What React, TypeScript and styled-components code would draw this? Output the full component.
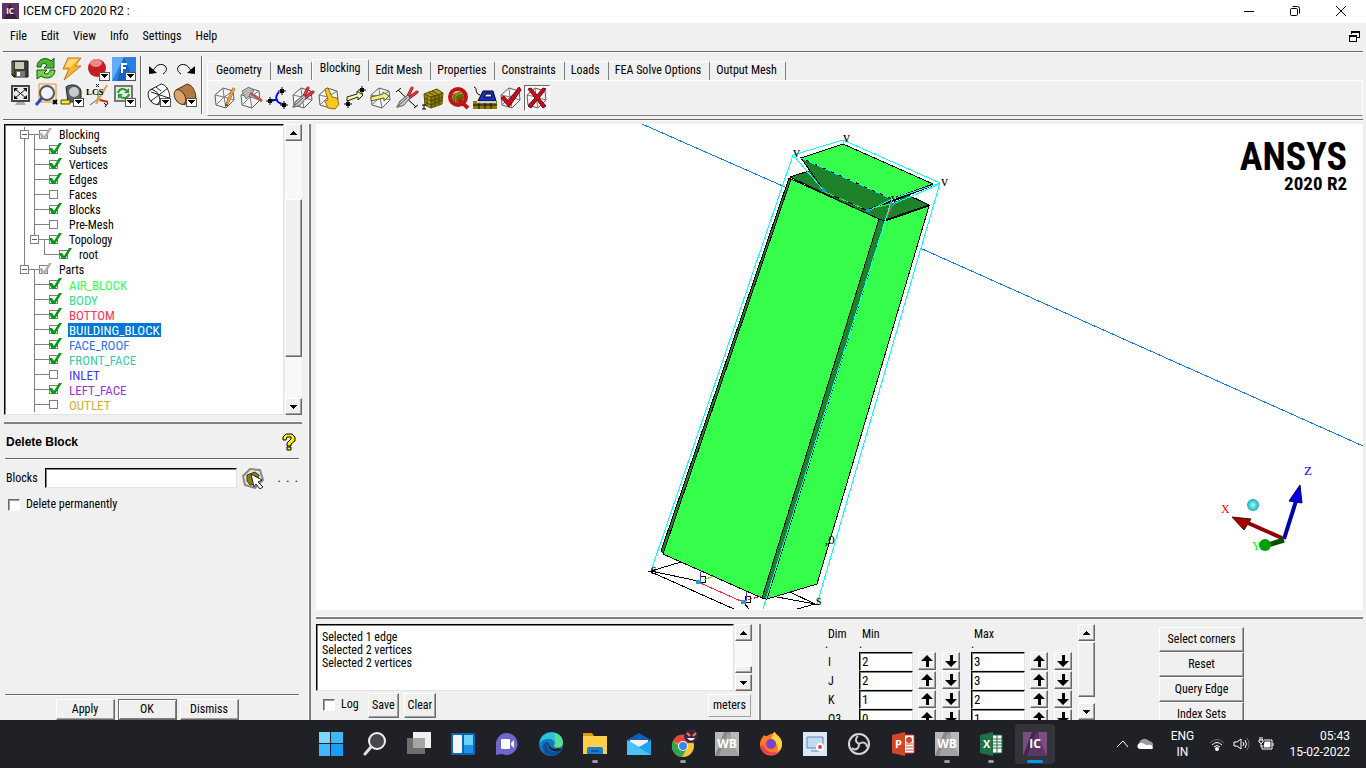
import React from "react";
import styled, { createGlobalStyle, css } from "styled-components";

const GlobalStyle = createGlobalStyle`
  * { box-sizing: border-box; }
  body { margin: 0; background: #f0f0f0; color: #000; font: 12px/15px "Roboto Condensed", Roboto, "Liberation Sans", sans-serif; }
  button, input, textarea { font: inherit; color: inherit; margin: 0; border-radius: 0; }
  svg { display: block; flex: none; }
`;

const raised = css`
  border: 1px solid;
  border-color: #fff #696969 #696969 #fff;
  box-shadow: inset -1px -1px 0 #a0a0a0;
`;
const sunken = css`
  border: 1px solid;
  border-color: #000 #e3e3e3 #e3e3e3 #000;
  box-shadow: inset 1px 1px 0 #808080;
`;

const Window = styled.div`
  display: flex;
  flex-direction: column;
  height: 100vh;
  overflow: hidden;
`;

/* ---------- title and menu ---------- */
const TitleBar = styled.header`
  display: flex;
  align-items: center;
  height: 23px;
  padding: 0 2px 2px;
  background: #fff;
  font: 12px/16px Roboto, "Noto Sans", sans-serif;
`;
const Title = styled.h1`
  flex: 1;
  margin: 0 0 0 4px;
  font: inherit;
`;
const CaptionButton = styled.button`
  display: grid;
  place-items: center;
  width: 46px;
  height: 21px;
  padding: 0;
  border: 0;
  background: none;
`;
const MenuBar = styled.nav`
  display: flex;
  align-items: center;
  height: 28px;
  padding: 0 6px 2px 4px;
`;
const MenuItem = styled.button`
  padding: 0 8px 0 6px;
  border: 0;
  background: none;
  text-align: left;
`;
const Push = styled.span`
  flex: 1;
`;
const BareButton = styled.button`
  display: grid;
  place-items: center;
  padding: 0;
  border: 0;
  background: none;
`;

/* ---------- toolbar ---------- */
const Toolbar = styled.div`
  display: flex;
  flex: none;
  height: 69px;
  margin: 0 3px;
  padding: 4px 0 0 4px;
  border-top: 1px solid #696969;
  border-bottom: 1px solid #696969;
  box-shadow: inset 0 1px 0 #fff, 0 1px 0 #fff;
`;
const ToolGrid = styled.div<{ $cols: number }>`
  display: grid;
  grid-template-columns: repeat(${(p) => p.$cols}, 26px);
  grid-auto-rows: 26px;
`;
const ToolButton = styled.button<{ $pressed?: boolean }>`
  display: grid;
  place-items: center;
  width: 26px;
  height: 26px;
  padding: 0;
  border: 1px solid transparent;
  background: none;
  ${(p) => p.$pressed && css`border-color: #696969 #fff #fff #696969; background: #f8f8f8;`}
`;
const Divider = styled.span<{ $tall?: boolean }>`
  flex: none;
  width: 2px;
  height: ${(p) => (p.$tall ? 58 : 52)}px;
  margin: 0 4px 0 3px;
  border-left: 1px solid #696969;
  border-right: 1px solid #fff;
`;
const TabArea = styled.div`
  flex: 1;
  padding-top: 2px;
`;
const TabList = styled.div`
  display: flex;
  align-items: flex-end;
  height: 22px;
`;
const Tab = styled.button<{ $active?: boolean }>`
  height: ${(p) => (p.$active ? 22 : 19)}px;
  margin-bottom: ${(p) => (p.$active ? -1 : 0)}px;
  padding: ${(p) => (p.$active ? "0 8px 4px 7px" : "0 8px 2px 6px")};
  border: 0;
  border-top: 1px solid #fff;
  border-right: 1px solid #808080;
  border-left: ${(p) => (p.$active ? "1px solid #fff" : 0)};
  border-top-right-radius: 2px;
  background: #f0f0f0;
  white-space: nowrap;
  &:first-child { padding-left: 8px; border-left: 1px solid #fff; border-top-left-radius: 3px; }
`;
const TabPanel = styled.div`
  display: flex;
  align-items: center;
  height: 36px;
  padding-left: 4px;
  border: 1px solid #fff;
  border-bottom-color: #808080;
`;

/* ---------- main split ---------- */
const Main = styled.main`
  display: grid;
  grid-template-columns: 302px 9px 1fr;
  flex: 1;
  min-height: 0;
  padding: 4px 3px 0 0;
`;
const SidePanel = styled.aside`
  display: flex;
  flex-direction: column;
  min-height: 0;
  padding-left: 4px;
`;
const VSash = styled.div`
  width: 3px;
  border-left: 1px solid #fff;
  border-right: 2px solid #808080;
`;
const HSash = styled.div`
  flex: none;
  height: 3px;
  border-top: 1px solid #fff;
  border-bottom: 2px solid #808080;
`;
const MainSash = styled(VSash)`
  justify-self: end;
`;

/* ---------- tree ---------- */
const TreeFrame = styled.div`
  display: flex;
  gap: 1px;
  flex: none;
  height: 291px;
  margin-bottom: 6px;
`;
const TreeBox = styled.ul`
  ${sunken}
  flex: 1;
  margin: 0;
  padding: 2px 0 0 14px;
  overflow: hidden;
  background: #fff;
  list-style: none;
`;
const TreeRow = styled.li`
  display: flex;
  align-items: center;
  height: 15px;
`;
const Guide = styled.span<{ $up?: boolean; $down?: boolean; $right?: boolean; $left?: boolean }>`
  display: grid;
  place-items: center;
  flex: none;
  width: 10px;
  height: 15px;
  background-repeat: no-repeat;
  background-image: ${(p) =>
    [p.$up, p.$down, p.$left, p.$right]
      .map((on) => `linear-gradient(${on ? "#808080, #808080" : "transparent, transparent"})`)
      .join(", ")};
  background-size: 1px 8px, 1px 8px, 5px 1px, 6px 1px;
  background-position: 5px 0, 5px 7px, 0 7px, 5px 7px;
`;
const Toggle = styled.button`
  display: grid;
  place-items: center;
  width: 9px;
  height: 9px;
  padding: 0;
  border: 1px solid #808080;
  background: #fff;
  &::after { content: ""; width: 5px; height: 1px; background: #606060; }
`;
const TreeLabel = styled.label<{ $color?: string; $selected?: boolean }>`
  display: flex;
  align-items: center;
  color: ${(p) => (p.$selected ? "#fff" : p.$color || "#000")};
`;
const TreeText = styled.span<{ $selected?: boolean; $caps?: boolean }>`
  height: 14px;
  margin-left: 5px;
  padding: 0 1px;
  line-height: 15px;
  background: ${(p) => (p.$selected ? "#0078d7" : "none")};
  font-size: ${(p) => (p.$caps ? 13 : 12)}px;
`;
const TickHolder = styled.span`
  position: relative;
  width: 14px;
  height: 15px;
  svg { position: absolute; left: 0; top: 0; pointer-events: none; }
`;
const TreeCheck = styled.input`
  display: block;
  appearance: none;
  width: 9px;
  height: 9px;
  && { margin: 3px 0 0; }
  border: 1px solid #808080;
  background: #fff;
`;

/* ---------- scroll bars ---------- */
const Scroll = styled.div`
  display: flex;
  flex-direction: column;
  flex: none;
  width: 17px;
  background: #f8f8f8;
`;
const ScrollButton = styled.button`
  ${raised}
  display: grid;
  place-items: center;
  flex: none;
  height: 17px;
  padding: 0;
  background: #f0f0f0;
`;
const Track = styled.div<{ $parts: [number, number, number] }>`
  display: grid;
  grid-template-rows: ${(p) => p.$parts.map((n) => n + "fr").join(" ")};
  flex: 1;
`;
const Thumb = styled.div`
  ${raised}
  grid-row: 2;
  background: #f0f0f0;
`;
function ScrollBar({ parts }: { parts: [number, number, number] }) {
  return (
    <Scroll>
      <ScrollButton aria-label="Scroll up">
        <svg width="7" height="4" shapeRendering="crispEdges"><path d="M3 0h1v1h1v1h1v1h1v1H0V3h1V2h1V1h1z" /></svg>
      </ScrollButton>
      <Track $parts={parts}><Thumb /></Track>
      <ScrollButton aria-label="Scroll down">
        <svg width="7" height="4" shapeRendering="crispEdges"><path d="M0 0h7v1H6v1H5v1H4v1H3V3H2V2H1V1H0z" /></svg>
      </ScrollButton>
    </Scroll>
  );
}

/* ---------- delete block panel ---------- */
const PanelTitle = styled.div`
  display: flex;
  align-items: center;
  justify-content: space-between;
  height: 35px;
  margin: 0 3px 0 1px;
  padding: 1px 3px 0 1px;
  border-bottom: 1px solid #696969;
  box-shadow: 0 1px 0 #fff;
`;
const PanelHeading = styled.h2`
  margin: 0;
  font: bold 12px/16px "Liberation Sans", Arial, sans-serif;
`;
const FieldRow = styled.div`
  display: flex;
  align-items: center;
  height: 20px;
  margin: 9px 4px 0 2px;
`;
const FieldLabel = styled.label`
  width: 39px;
`;
const FieldInput = styled.input`
  ${sunken}
  width: 193px;
  height: 20px;
  background: #fff;
`;
const PickButton = styled(BareButton)`
  margin: 0 12px 0 5px;
`;
const MoreButton = styled(BareButton)`
  white-space: pre;
`;
const CheckLabel = styled.label`
  display: flex;
  align-items: center;
  gap: 6px;
  white-space: nowrap;
`;
const PanelCheck = styled(CheckLabel)`
  margin: 9px 0 0 4px;
`;
const BoxCheck = styled.input`
  appearance: none;
  width: 12px;
  height: 12px;
  border: 1px solid;
  border-color: #696969 #fff #fff #696969;
  background: #fff;
  box-shadow: inset 1px 1px 0 #a0a0a0;
`;
const PanelActions = styled.div`
  display: flex;
  justify-content: center;
  gap: 3px;
  height: 26px;
  margin: auto 3px 0 1px;
  padding: 4px 10px 0 0;
  border-top: 1px solid #696969;
  box-shadow: inset 0 1px 0 #fff;
`;
const PushButton = styled.button<{ $default?: boolean; $flat?: boolean; $pad?: number }>`
  ${raised}
  padding: 0 ${(p) => p.$pad ?? 1}px;
  background: #f0f0f0;
  white-space: nowrap;
  ${(p) => p.$default && css`border-color: #696969; box-shadow: inset 1px 1px 0 #fff, inset -1px -1px 0 #808080;`}
  ${(p) => p.$flat && css`border-color: #fff #a0a0a0 #a0a0a0 #fff; box-shadow: none;`}
`;
const ActionButton = styled(PushButton)`
  width: 59px;
  height: 21px;
`;

/* ---------- workspace ---------- */
const Workspace = styled.section`
  display: flex;
  flex-direction: column;
  min-width: 0;
  min-height: 0;
  padding-left: 5px;
`;
const Viewport = styled.div`
  position: relative;
  flex: 1;
  min-height: 0;
  overflow: hidden;
  background: #fff;
`;
const Scene = styled.svg`
  width: 100%;
  height: 100%;
`;
const Brand = styled.div`
  position: absolute;
  top: 14px;
  right: 16px;
  text-align: right;
  font-family: "Roboto Condensed", Roboto, "Liberation Sans", sans-serif;
  font-weight: bold;
`;
const BrandName = styled.div`
  font-size: 38px;
  line-height: 38px;
`;
const BrandVersion = styled.div`
  font-size: 19px;
  line-height: 16px;
`;
const BottomArea = styled.div`
  display: flex;
  flex: none;
  height: 110px;
  padding-top: 5px;
  overflow: hidden;
`;
const ViewGap = styled(HSash)`
  margin-top: 6px;
  margin-bottom: -9px;
`;
const LogPane = styled.div`
  flex: 0 0 436px;
  padding-top: 9px;
`;
const LogFrame = styled.div`
  display: flex;
  gap: 1px;
  height: 67px;
`;
const LogText = styled.textarea`
  ${sunken}
  flex: 1;
  padding: 6px 5px 0;
  background: #fff;
  line-height: 13px;
  resize: none;
  overflow: hidden;
`;
const LogActions = styled.div`
  display: flex;
  align-items: flex-start;
  gap: 5px;
  padding: 2px 1px 0 7px;
`;
const LogCheck = styled(CheckLabel)`
  width: 40px;
  height: 23px;
`;
const LogButton = styled(PushButton)`
  height: 25px;
`;
const UnitButton = styled(PushButton)`
  height: 23px;
  margin-top: 1px;
`;
const PaneSash = styled(VSash)`
  flex: none;
  margin: 9px 64px 0 6px;
`;
const DimPane = styled.div`
  display: flex;
  flex: none;
  height: 105px;
  padding-top: 9px;
  overflow: hidden;
`;
const DimTable = styled.table`
  align-self: flex-start;
  table-layout: fixed;
  width: 253px;
  border-collapse: collapse;
  th, td { height: 19px; padding: 0; font-weight: normal; text-align: left; vertical-align: top; }
  thead th { padding: 3px 0 0 3px; }
  tbody th { padding: 3px 0 0 3px; }
`;
const DotRow = styled.tr`
  && td { height: 9px; line-height: 3px; }
`;
const DimInput = styled.input`
  ${sunken}
  display: block;
  width: 54px;
  height: 19px;
  padding: 0 2px;
  background: #fff;
  font-size: 13px;
`;
const StepButton = styled.button`
  ${raised}
  display: grid;
  place-items: center;
  width: 18px;
  height: 18px;
  && { margin-left: 3px; }
  padding: 0;
  background: #f0f0f0;
`;
const SideButtons = styled.div`
  display: flex;
  flex-direction: column;
  flex: none;
  width: 85px;
  margin: 12px 0 0 64px;
`;
const SideButton = styled(PushButton)`
  flex: none;
  height: 25px;
`;

/* ---------- taskbar ---------- */
const TaskBar = styled.footer`
  display: grid;
  grid-template-columns: 1fr auto 1fr;
  flex: none;
  height: 48px;
  background: #202127;
  color: #fff;
`;
const TaskApps = styled.div`
  display: flex;
  grid-column: 2;
`;
const TaskButton = styled.button<{ $state?: "open" | "active" }>`
  position: relative;
  display: grid;
  place-items: center;
  width: 40px;
  height: 40px;
  && { margin: 4px 2px; }
  padding: 0;
  border: 0;
  border-radius: 4px;
  background: ${(p) => (p.$state === "active" ? "#34353b" : "none")};
  &::after {
    content: "";
    display: ${(p) => (p.$state ? "block" : "none")};
    position: absolute;
    bottom: 1px;
    width: ${(p) => (p.$state === "active" ? 16 : 6)}px;
    height: 3px;
    border-radius: 2px;
    background: ${(p) => (p.$state === "active" ? "#0a93ff" : "#9a9a9a")};
  }
`;
const Tray = styled.div`
  display: flex;
  align-items: center;
  justify-content: flex-end;
  padding-right: 16px;
  font: 12px/16px Roboto, "Noto Sans", sans-serif;
`;
const TrayGroup = styled.div`
  display: flex;
  align-items: center;
  gap: 8px;
`;
const Language = styled.div`
  width: 54px;
  text-align: center;
`;
const Clock = styled.time`
  margin-left: 14px;
  text-align: right;
`;

/* ---------- toolbar drawings ---------- */
const Wire = () => (
  <g fill="none" stroke="#5c5c5c">
    <path d="M2 9 10 2l10 3 1 9-8 8-10-3z" fill="#f4f4f4" />
    <path d="M2 9l9 2 9-6M11 11l2 11M11 11l-8 8M11 11l10 3M10 2l1 9" stroke="#7a7a7a" />
  </g>
);
const Icon = ({ children }: { children: React.ReactNode }) => (
  <svg width="24" height="24" viewBox="0 0 24 24">{children}</svg>
);
const Drop = () => (
  <g shapeRendering="crispEdges">
    <rect x="13" y="15" width="10" height="8" fill="#fff" stroke="#555" />
    <path d="M14 17h8l-4 4z" />
  </g>
);
const Star = ({ x, y }: { x: number; y: number }) => (
  <g>
    <path d={`M${x - 4} ${y}h8M${x} ${y - 4}v8M${x - 2} ${y - 2}l4 4M${x + 2} ${y - 2}l-4 4`} stroke="#000" fill="none" />
    <circle cx={x} cy={y} r="2" />
  </g>
);
const Cube = ({ x = 2, y = 2, s = 1 }: { x?: number; y?: number; s?: number }) => (
  <g transform={`translate(${x} ${y}) scale(${s})`}>
    <path d="M1 6 14 1l6 4-1 11-11 4-6-3z" fill="#b09c18" stroke="#504600" />
    <path d="M8 9 20 5l-1 11-11 4z" fill="#857408" />
    <path d="M1 6l7 3 12-4M8 9v11M5 4l7 4v11M9 3l7 4v10M1 10l7 3 12-4M2 14l6 3 11-5M4 7v11" stroke="#4d4300" fill="none" />
  </g>
);
const Pliers = () => (
  <g fill="none" strokeLinecap="round" strokeLinejoin="round">
    <path d="M13 10 17 2M14 12 22 6" stroke="#8c1018" strokeWidth="3" />
    <path d="M13 10 17 2M14 12 22 6" stroke="#e83440" strokeWidth="2" />
    <path d="M2 21 5 15l8-6 2 3-6 7z" fill="#c8c8c8" stroke="#5a5a5a" />
    <path d="M3 20l9-8" stroke="#5a5a5a" />
  </g>
);

const fileIcons: [string, React.ReactNode][] = [
  ["Save project", <Icon><path d="M4 4h16v16H6l-2-2z" fill="#3c3c34" stroke="#111" /><path d="M7 5h9v7H7z" fill="#c9c9b4" /><path d="M8 14h9v6H8z" fill="#777" /><path d="M9 15h3v4H9z" fill="#fff" /><path d="M5 5v12" stroke="#80803c" /></Icon>],
  ["Refresh", <Icon><path d="M3 10c0-8 9-11 14-6l3-3v10h-10l3-3c-3-3-6-1-6 2z" fill="#4cb532" stroke="#14560c" /><path d="M21 13c0 8-9 10-14 6l-4 3v-9h10l-3 3c3 2 6 0 6-3z" fill="#76d24a" stroke="#14560c" /></Icon>],
  ["Compute", <Icon><path d="M8 1h13l-6 8h6L4 23l5-11H3z" fill="#f8b62c" stroke="#c2781c" /><path d="M9 2h9l-7 8H5z" fill="#ffd878" /></Icon>],
  ["Record", <Icon><circle cx="11" cy="11" r="9" fill="#c41d22" /><ellipse cx="10" cy="6" rx="6" ry="4" fill="#ee8787" /><Drop /></Icon>],
  ["Fluent", <Icon><path d="M0 0h24v24H0z" fill="#2c7fe0" /><path d="M12 0 0 24V0z" fill="#64aaf5" /><path d="M12 0 22 24H5z" fill="#1b62c0" /><path d="M10 16V7h5M10 11h4" stroke="#fff" strokeWidth="2" fill="none" /><Drop /></Icon>],
  ["Fit window", <Icon><rect x="4" y="3" width="17" height="15" fill="#e8ecef" stroke="#444" strokeWidth="2" /><path d="M7 6l11 9M18 6 7 15" stroke="#111" strokeWidth="1" /><path d="M6 5h4l-4 4zM19 5h-4l4 4zM6 16h4l-4-4zM19 16h-4l4-4z" /><path d="M9 19h7l2 3H7z" fill="#aaa" /></Icon>],
  ["Box zoom", <Icon><path d="M5 1h17v18H5z" fill="none" stroke="#f08a1c" strokeWidth="1" /><circle cx="13" cy="10" r="7" fill="#eef4fa" stroke="#555" strokeWidth="2" /><path d="M8 15l-6 7" stroke="#234cc4" strokeWidth="3" /><path d="M19 17l4 4M23 17l-4 4" stroke="#000" strokeWidth="2" /></Icon>],
  ["Measure", <Icon><path d="M6 4c5-4 14-2 15 4v11H8z" fill="#5b6066" stroke="#222" /><circle cx="14" cy="9" r="5" fill="#c8ccd0" /><path d="M1 17h9v4H1z" fill="#ffe428" stroke="#554400" /><Drop /></Icon>],
  ["Local coordinate system", <Icon><path d="M12 8v8l9 3M12 16l-8 6" stroke="#208040" fill="none" strokeWidth="1" /><path d="M21 2 10 21" stroke="#e9a13b" strokeWidth="2" /><path d="M14 17l8 2" stroke="#d22" strokeWidth="2" /><text x="0" y="12" fontSize="9" fontWeight="bold" fontFamily="Liberation Serif, serif">LCS</text><path d="M10 1l3 3M13 1l-3 3M18 20l2 2M22 20l-3 4" stroke="#000" /></Icon>],
  ["Update view", <Icon><rect x="3" y="3" width="17" height="15" fill="#e3ece3" stroke="#777" strokeWidth="2" /><path d="M6 10c1-5 7-5 9-2M17 11c-1 5-7 5-9 2" stroke="#2a9a30" strokeWidth="2" fill="none" /><path d="M17 5v5h-5zM6 16v-5h5z" fill="#2a9a30" /><Drop /></Icon>],
];
const viewIcons: [string, React.ReactNode][] = [
  ["Undo", <Icon><path d="M6 14c3-7 9-8 12-5 3 3 1 6-2 8" fill="none" stroke="#000" strokeWidth="1" /><path d="M2 9v8l8-1z" /></Icon>],
  ["Redo", <Icon><path d="M18 14c-3-7-9-8-12-5-3 3-1 6 2 8" fill="none" stroke="#000" strokeWidth="1" /><path d="M22 9v8l-8-1z" /></Icon>],
  ["Wireframe", <Icon><g fill="none" stroke="#222"><path d="M3 7 14 1c6 1 8 7 9 13l-12 8z" fill="#fff" /><ellipse cx="7" cy="14" rx="5" ry="8" transform="rotate(-30 7 14)" fill="#fff" /><path d="M4 18l17-13M4 9l18 6M9 4l5 4" /></g><Drop /></Icon>],
  ["Solid", <Icon><path d="M3 7 14 1c6 1 8 7 9 13l-12 8z" fill="#b07a44" stroke="#5a3410" /><ellipse cx="7" cy="14" rx="5" ry="8" transform="rotate(-30 7 14)" fill="#d9a56c" stroke="#5a3410" /><Drop /></Icon>],
];
const blockIcons: [string, React.ReactNode][] = [
  ["Create block", <Icon><Wire /><path d="M21 2l-8 18" stroke="#7a4a10" strokeWidth="3" /><path d="M21 2l-7 16" stroke="#f3a73a" strokeWidth="2" /></Icon>],
  ["Split block", <Icon><Wire /><path d="M3 5l7-4 5 4-8 8z" fill="#b8b8b8" stroke="#777" /><path d="M11 7l12 8" stroke="#b05a5a" strokeWidth="3" /></Icon>],
  ["Merge vertices", <Icon><path d="M14 6c-5 5-3 11 4 12M5 14h8" fill="none" stroke="#0018e0" strokeWidth="2" /><Star x={17} y={5} /><Star x={5} y={15} /><Star x={19} y={19} /></Icon>],
  ["Edit block", <Icon><Wire /><Pliers /></Icon>],
  ["Associate", <Icon><Wire /><path d="M8 3l3-1 4 9 5 1 2 6-4 5-7-1-3-7 3-1z" fill="#fbc81c" stroke="#9a6a00" /></Icon>],
  ["Move vertex", <Icon><path d="M4 11l10-3V5l6 4-5 5v-3L4 15z" fill="#fbf7a0" stroke="#222" /><Star x={19} y={4} /><Star x={5} y={18} /></Icon>],
  ["Transform blocks", <Icon><Wire /><path d="M2 11l12-3V6l6 4-5 5v-3L2 15z" fill="#f4ee6c" stroke="#555" /></Icon>],
  ["Edit edge", <Icon><path d="M3 4l18 17" stroke="#000" /><path d="M1 6l5-4M19 22l4-3" stroke="#000" /><Pliers /></Icon>],
  ["Pre-mesh params", <Icon><Cube /><path d="M1 23h4M1 19h4M3 19v4" stroke="#000" /></Icon>],
  ["Pre-mesh quality", <Icon><circle cx="11" cy="11" r="8" fill="#f0f0f0" stroke="#c4101a" strokeWidth="4" /><Cube x={5} y={5} s={0.6} /><path d="M12 14l9 8" stroke="#c4101a" strokeWidth="4" /></Icon>],
  ["Pre-mesh smooth", <Icon><path d="M0 15h24v8H0z" fill="#8a7a0c" /><path d="M0 19h24M6 15v8M12 15v8M18 15v8" stroke="#111" /><path d="M5 15l5-10h10l3 10z" fill="#1630c8" stroke="#000" /><path d="M11 11l2-3h5l1 3z" fill="#f0f0f0" stroke="#000" /><path d="M4 16h19" stroke="#ccd" strokeWidth="2" /><path d="M1 1c4 1 0 6 6 8" stroke="#000" fill="none" /></Icon>],
  ["Check block", <Icon><Wire /><path d="M2 12l3-2 4 5L20 1l2 3L10 21z" fill="#c4101a" stroke="#7a0008" /></Icon>],
  ["Delete block", <Icon><Wire /><path d="M3 3l3-1 6 7 6-7 3 1-7 9 7 8-3 2-6-8-6 8-3-2 7-8z" fill="#c4101a" stroke="#7a0008" /></Icon>],
];
const tabs = ["Geometry", "Mesh", "Blocking", "Edit Mesh", "Properties", "Constraints", "Loads", "FEA Solve Options", "Output Mesh"];

/* ---------- tree data ---------- */
type Node = { text: string; level: 0 | 1 | 2; check: "on" | "off" | "gray"; color?: string; selected?: boolean; open?: boolean; trunk?: boolean };
const nodes: Node[] = [
  { text: "Blocking", level: 0, check: "gray", open: true, trunk: true },
  { text: "Subsets", level: 1, check: "on", trunk: true },
  { text: "Vertices", level: 1, check: "on", trunk: true },
  { text: "Edges", level: 1, check: "on", trunk: true },
  { text: "Faces", level: 1, check: "off", trunk: true },
  { text: "Blocks", level: 1, check: "on", trunk: true },
  { text: "Pre-Mesh", level: 1, check: "off", trunk: true },
  { text: "Topology", level: 1, check: "on", open: true, trunk: true },
  { text: "root", level: 2, check: "on", trunk: true },
  { text: "Parts", level: 0, check: "gray", open: true },
  { text: "AIR_BLOCK", level: 1, check: "on", color: "#33ff4d" },
  { text: "BODY", level: 1, check: "on", color: "#33e08c" },
  { text: "BOTTOM", level: 1, check: "on", color: "#ff3350" },
  { text: "BUILDING_BLOCK", level: 1, check: "on", selected: true },
  { text: "FACE_ROOF", level: 1, check: "on", color: "#3373f0" },
  { text: "FRONT_FACE", level: 1, check: "on", color: "#33d0a8" },
  { text: "INLET", level: 1, check: "off", color: "#3a3aff" },
  { text: "LEFT_FACE", level: 1, check: "on", color: "#9a33d8" },
  { text: "OUTLET", level: 1, check: "off", color: "#d0b033" },
];
const Minus = ({ name }: { name: string }) => <Toggle aria-label={`Collapse ${name}`} />;
function TreeItem({ node }: { node: Node }) {
  const { level, text } = node;
  return (
    <TreeRow>
      {level === 0 ? (
        <>
          <Guide $up $down={node.trunk} $right><Minus name={text} /></Guide>
          <Guide $left $right $down />
        </>
      ) : (
        <Guide $up={node.trunk} $down={node.trunk} />
      )}
      {level === 1 && (
        <>
          <Guide $up $down={!node.open} $right>{node.open && <Minus name={text} />}</Guide>
          <Guide $left $right $down={node.open} />
        </>
      )}
      {level === 2 && (
        <>
          <Guide />
          <Guide $up $right />
          <Guide $left $right />
        </>
      )}
      <TreeLabel $color={node.color} $selected={node.selected}>
        <TickHolder>
          <TreeCheck type="checkbox" defaultChecked={node.check !== "off"} />
          {node.check !== "off" && (
            <svg width="14" height="15">
              <path d="M0 6h3l2 3 5-8h3L6 12H3z" fill={node.check === "on" ? "#009a10" : "#b0b0b0"} />
            </svg>
          )}
        </TickHolder>
        <TreeText $selected={node.selected} $caps={text === text.toUpperCase()}>{text}</TreeText>
      </TreeLabel>
    </TreeRow>
  );
}

const dims = [["I", 2, 3], ["J", 2, 3], ["K", 1, 2], ["O3", 0, 1]] as const;
const UpArrow = () => <svg width="12" height="12"><path d="M6 0l6 6H8v6H5V6H0z" /></svg>;
const DownArrow = () => <svg width="12" height="12"><path d="M6 12l6-6H8V0H5v6H0z" /></svg>;

/* ---------- 3D scene ---------- */
const LIT = "#36ff4b";
const DARK = "#1d8229";
function Model() {
  return (
    <Scene viewBox="316 124 1047 486" preserveAspectRatio="xMidYMid meet" aria-label="Blocking model">
      <g shapeRendering="crispEdges" strokeWidth="1" fill="none">
        <path d="M642 124 785 187M920 248l443 198" stroke="#1080e0" />
        <g stroke="#000">
          <path d="M790 177 812 170 908 195 929 205 882 221z" fill={DARK} />
          <path d="M893 203l15-8 15-5-11-8-24 17z" fill="#fff" stroke="none" />
          <path d="M789 178 792 180 664 554 661 551z" fill={DARK} />
          <path d="M791 179 879 219 762 598 663 554z" fill={LIT} />
          <path d="M879 219 885 221 767 599 762 598z" fill={DARK} />
          <path d="M885 221 929 206 817 584 767 599z" fill={LIT} />
          <path d="M801 158 892 199 868 211 825 192z" fill={DARK} />
          <path d="M868 210 892 201 933 185" strokeWidth="2" />
          <path d="M908 195 929 205" />
          <path d="M801 158 843 144 933 184 892 199z" fill={LIT} />
        </g>
        <g stroke="#00ffff">
          <path d="M651 571 793 155 843 140 940 183 817 604" />
          <path d="M793 155 825 192M843 140v4M868 211 892 199 940 183M893 204 940 184M892 199 763 609" />
          <path d="M801 158 892 199" strokeDasharray="6 3" />
        </g>
        <path d="M893 203 887 217" stroke="#ff5020" />
        <path d="M825 192 869 211" stroke="#30e050" strokeDasharray="10 5" />
        <path d="M873 208 890 204" stroke="#30ff40" />
        <g stroke="#2090d0" strokeWidth="3"><path d="M822 190h4M866 210h4M890 204h4" /></g>
        <g stroke="#000">
          <path d="M681 562 651 571 698 581M651 572 734 609M777 597 815 604 790 592M797 609 815 604M744 603 749 609M648 571h7M811 604h8" />
          <rect x="700" y="576" width="5" height="6" />
          <rect x="745" y="596" width="5" height="6" />
        </g>
        <path d="M698 582 743 602" stroke="#ff2040" />
        <path d="M700 572v8M746 592v9" stroke="#5030e0" />
        <path d="M704 580l9-4" stroke="#60e020" />
        <path d="M748 600l13-4" stroke="#ff1050" strokeDasharray="4 2" />
        <g fill="#20a0d0"><path d="M696 580h5v4h-5zM741 600h5v4h-5z" /></g>
      </g>
      <g fontFamily="Liberation Serif, serif" fontSize="14">
        <text x="843" y="142">v</text>
        <text x="793" y="157">v</text>
        <text x="941" y="186">v</text>
        <text x="891" y="203">v</text>
        <text x="651" y="574">s</text>
        <text x="816" y="605">s</text>
        <text x="825" y="544" fontSize="13">,0</text>
        <text x="1304" y="475" fontSize="13" fill="#0000ff">Z</text>
        <text x="1221" y="513" fontSize="12" fill="#ff0000">X</text>
        <text x="1252" y="550" fontSize="12" fill="#00ff00">Y</text>
      </g>
      <defs>
        <radialGradient id="orb"><stop offset="0" stopColor="#a0ffff" /><stop offset="1" stopColor="#18b0b4" /></radialGradient>
      </defs>
      <circle cx="1253" cy="505" r="6" fill="url(#orb)" />
      <path d="M1282 538 1248 523" stroke="#900000" strokeWidth="4" />
      <path d="M1232 517 1251 519 1244 530z" fill="#a00000" stroke="#600000" />
      <path d="M1284 539 1296 501" stroke="#0000b0" strokeWidth="4" />
      <path d="M1300 485 1289 501 1302 503z" fill="#0000e0" stroke="#000080" />
      <path d="M1284 540 1268 545" stroke="#005000" strokeWidth="5" />
      <circle cx="1265" cy="545" r="6" fill="#00a000" />
    </Scene>
  );
}

/* ---------- taskbar drawings ---------- */
const Tile = ({ text, a, b, c }: { text: string; a: string; b: string; c: string }) => (
  <svg width="24" height="24" viewBox="0 0 24 24">
    <path d="M0 0h24v24H0z" fill={a} />
    <path d="M9 0 0 24h18L15 0z" fill={b} />
    <path d="M13 0 4 24h20z" fill={c} />
    <text x="12" y="16" textAnchor="middle" fontFamily="Open Sans, sans-serif" fontWeight="bold" fontSize="12" fill="#fff">{text}</text>
  </svg>
);
const WB = <Tile text="WB" a="#b8b8b8" b="#888" c="#a2a2a2" />;
const apps: { name: string; state?: "open" | "active"; icon: React.ReactNode }[] = [
  { name: "Start", icon: <Icon><path d="M0 0h11v11H0zM12 0h12v11H12zM0 12h11v12H0zM12 12h12v12H12z" fill="#3fb9fa" /><path d="M0 0h11v11H0z" fill="#79d8fb" /><path d="M12 12h12v12H12z" fill="#189cf8" /></Icon> },
  { name: "Search", icon: <Icon><circle cx="14" cy="9" r="8" fill="#46474b" stroke="#f2f2f2" strokeWidth="2" /><path d="M8 15l-6 7" stroke="#e0e0e0" strokeWidth="3" strokeLinecap="round" /></Icon> },
  { name: "Task view", icon: <Icon><path d="M6 0h18v16H6z" fill="#f0f0f0" /><path d="M0 6h18v16H0z" fill="#6e6e6e" /><path d="M6 6h12v10H6z" fill="#a6a6a6" /></Icon> },
  { name: "Widgets", icon: <Icon><rect y="1" width="24" height="22" rx="1" fill="#0a67b8" /><rect x="2" y="3" width="9" height="18" rx="1" fill="#f4f4f4" /><path d="M13 3h9v10h-9z" fill="#6bd0fb" /><path d="M13 13h9v8h-9z" fill="#1c93ea" /></Icon> },
  { name: "Chat", icon: <Icon><path d="M12 1a11 11 0 1 1-5 21l-6 1V12A11 11 0 0 1 12 1z" fill="#6e67cf" /><rect x="6" y="7" width="9" height="10" rx="1" fill="#fff" /><path d="M16 11l3-3v8l-3-3z" fill="#fff" /></Icon> },
  { name: "Edge", icon: <Icon><circle cx="12" cy="12" r="12" fill="#1377c8" /><path d="M1 9C4-3 24-3 24 11c0 5-8 6-9 3 2-4-1-7-5-7-5 0-9 2-9 6z" fill="#2cc3d6" /><path d="M14 1c7 1 10 6 10 10 0 5-8 6-9 3 2-4 2-8-1-13z" fill="#5cdc8c" /><path d="M9 10c-3 6 3 12 12 9-4 6-15 7-17-2-1-4 2-7 5-7z" fill="#0b4f9a" /><path d="M10 10c-1 5 4 8 9 6l4 1-2 2c-8 2-14-3-11-9z" fill="#202127" /></Icon> },
  { name: "File Explorer", state: "open", icon: <Icon><path d="M0 1h9l2 3H0z" fill="#e09a0c" /><path d="M0 4h24v18H0z" fill="#ffcf4a" /><path d="M4 22v-5q0-2 2-2h12q2 0 2 2v5z" fill="#1a7ed0" /><path d="M8 19h8" stroke="#0c5a9c" strokeWidth="2" /></Icon> },
  { name: "Mail", icon: <Icon><path d="M0 8 12 1l12 7v4H0z" fill="#0f5fae" /><path d="M3 8h18v8H3z" fill="#f2f2f2" /><path d="M0 8l12 7 12-7v15H0z" fill="#1fa3ea" /><path d="M0 8l24 15H0z" fill="#48c2f8" /></Icon> },
  { name: "Chrome", state: "open", icon: <svg width="30" height="34" viewBox="0 0 30 34"><circle cx="15" cy="19" r="11" fill="#f8c630" /><path d="M15 19 5 14A11 11 0 0 1 25 14z" fill="#e2483a" /><path d="M5 14A11 11 0 0 0 14 30l5-9-6-1z" fill="#2fa551" /><circle cx="15" cy="19" r="5" fill="#fff" /><circle cx="15" cy="19" r="4" fill="#3f82f0" /><circle cx="23" cy="9" r="7" fill="#40233f" /><path d="M19 6l3 3M28 6l-3 3" stroke="#f08050" strokeWidth="2" /><path d="M19 11q4 5 8 0z" fill="#fff" /></svg> },
  { name: "Workbench", icon: WB },
  { name: "Firefox", icon: <Icon><path d="M12 2c3-1 3-2 4-2 1 3 7 5 7 12a11 11 0 0 1-22 1C1 8 3 6 5 3c1 2 3 1 7-1z" fill="#ff7a22" /><path d="M15 0c2 3 8 5 8 12 0 4-2 7-5 9 2-6 0-11-6-14z" fill="#ffd43a" /><path d="M1 13a11 11 0 0 0 20 5c-6 5-15 2-16-4z" fill="#f03a5a" /><circle cx="12" cy="12" r="5" fill="#7a42c8" /></Icon> },
  { name: "Recorder", icon: <Icon><path d="M0 0h24v24H0z" fill="#dbe9f6" /><path d="M4 5h16v11H4zM8 19h8" stroke="#5c88b4" fill="#c3daf0" /><circle cx="17" cy="15" r="4" fill="#fff" /><circle cx="17" cy="15" r="2" fill="#e8404a" /></Icon> },
  { name: "OBS", icon: <Icon><circle cx="12" cy="12" r="10" fill="#1b1b1d" stroke="#d8d8d8" strokeWidth="2" /><path d="M12 12C8 10 8 6 11 4M12 12c4-3 8-1 8 3M12 12c0 5-4 7-7 4" stroke="#cfcfcf" strokeWidth="2" fill="none" /></Icon> },
  { name: "PowerPoint", icon: <Icon><path d="M13 3h10v18H13z" fill="#fff" stroke="#d24625" /><path d="M15 12h7M15 15h7M15 18h7" stroke="#d24625" /><circle cx="18" cy="8" r="3" fill="#d24625" /><path d="M1 3l13-3v24L1 21z" fill="#d24625" /><text x="4" y="16" fontFamily="Open Sans, sans-serif" fontWeight="bold" fontSize="11" fill="#fff">P</text></Icon> },
  { name: "Workbench project", state: "open", icon: WB },
  { name: "Excel", state: "open", icon: <Icon><path d="M13 3h10v18H13z" fill="#fff" stroke="#1e7145" /><path d="M14 7h9M14 10h9M14 13h9M14 16h9M18 3v18" stroke="#1e7145" /><path d="M1 3l13-3v24L1 21z" fill="#1e7145" /><text x="4" y="16" fontFamily="Open Sans, sans-serif" fontWeight="bold" fontSize="11" fill="#fff">X</text></Icon> },
  { name: "ICEM CFD", state: "active", icon: <Tile text="IC" a="#7c4d84" b="#45264c" c="#5c3664" /> },
];

export default function App() {
  return (
    <Window>
      <GlobalStyle />
      <TitleBar>
        <svg width="17" height="16" viewBox="0 0 17 16">
          <path d="M0 0h17v16H0z" fill="#5c3664" /><path d="M8 0 2 16h13z" fill="#3c1f44" />
          <text x="8" y="11" textAnchor="middle" fontFamily="Open Sans, sans-serif" fontWeight="bold" fontSize="8" fill="#fff">IC</text>
        </svg>
        <Title>ICEM CFD 2020 R2 :</Title>
        <CaptionButton aria-label="Minimize"><svg width="10" height="10"><path d="M0 5h10" stroke="#000" shapeRendering="crispEdges" /></svg></CaptionButton>
        <CaptionButton aria-label="Restore"><svg width="10" height="10" fill="none" stroke="#000"><rect x="0.5" y="2.5" width="7" height="7" rx="1" /><path d="M2.5 .5h5q2 0 2 2v5" /></svg></CaptionButton>
        <CaptionButton aria-label="Close"><svg width="10" height="10"><path d="M0 0l10 10M10 0 0 10" stroke="#000" /></svg></CaptionButton>
      </TitleBar>
      <MenuBar>
        {["File", "Edit", "View", "Info", "Settings", "Help"].map((m) => <MenuItem key={m}>{m}</MenuItem>)}
        <Push />
        <BareButton aria-label="Restore document">
          <svg width="12" height="12" fill="none" stroke="#000" shapeRendering="crispEdges"><path d="M3 4V1h8v6H8M3 2h8M1 5h7v6H1zM1 6h7" /></svg>
        </BareButton>
      </MenuBar>
      <Toolbar>
        <ToolGrid $cols={5}>
          {fileIcons.map(([name, icon]) => <ToolButton key={name} aria-label={name}>{icon}</ToolButton>)}
        </ToolGrid>
        <Divider />
        <ToolGrid $cols={2}>
          {viewIcons.map(([name, icon]) => <ToolButton key={name} aria-label={name}>{icon}</ToolButton>)}
        </ToolGrid>
        <Divider $tall />
        <TabArea>
          <TabList role="tablist">
            {tabs.map((t) => <Tab key={t} role="tab" aria-selected={t === "Blocking"} $active={t === "Blocking"}>{t}</Tab>)}
          </TabList>
          <TabPanel>
            {blockIcons.map(([name, icon]) => (
              <ToolButton key={name} aria-label={name} $pressed={name === "Delete block"}>{icon}</ToolButton>
            ))}
          </TabPanel>
        </TabArea>
      </Toolbar>

      <Main>
        <SidePanel>
          <TreeFrame>
            <TreeBox>{nodes.map((n) => <TreeItem key={n.text} node={n} />)}</TreeBox>
            <ScrollBar parts={[58, 158, 41]} />
          </TreeFrame>
          <HSash />
          <PanelTitle>
            <PanelHeading>Delete Block</PanelHeading>
            <BareButton aria-label="Help">
              <svg width="14" height="18" viewBox="0 0 14 18"><path d="M4 7H1V4l3-3h6l3 3v4l-4 3v2H5v-3l4-4V4H5zM5 14h4v3H5z" fill="#ffee00" stroke="#000" /></svg>
            </BareButton>
          </PanelTitle>
          <FieldRow>
            <FieldLabel htmlFor="blocks">Blocks</FieldLabel>
            <FieldInput id="blocks" />
            <PickButton aria-label="Select blocks">
              <svg width="23" height="21" viewBox="0 0 23 21"><path d="M1 8 8 1l10 1 3 10-8 8-10-3z" fill="#e8e8e8" stroke="#888" strokeWidth="2" /><path d="M5 7l8-3 4 3-2 9-7 1-3-4z" fill="#8e7c10" stroke="#443a00" /><path d="M9 6l11 6-4 2 5 5-3 2-4-5-2 3z" fill="#fff" stroke="#222" /></svg>
            </PickButton>
            <MoreButton aria-label="More">{".  .  ."}</MoreButton>
          </FieldRow>
          <PanelCheck><BoxCheck type="checkbox" />Delete permanently</PanelCheck>
          <PanelActions>
            <ActionButton>Apply</ActionButton>
            <ActionButton $default>OK</ActionButton>
            <ActionButton>Dismiss</ActionButton>
          </PanelActions>
        </SidePanel>
        <MainSash />
        <Workspace>
          <Viewport>
            <Model />
            <Brand><BrandName>ANSYS</BrandName><BrandVersion>2020 R2</BrandVersion></Brand>
          </Viewport>
          <ViewGap />
          <BottomArea>
            <LogPane>
              <LogFrame>
                <LogText aria-label="Messages" readOnly value={"Selected 1 edge\nSelected 2 vertices\nSelected 2 vertices"} />
                <ScrollBar parts={[25, 7, 1]} />
              </LogFrame>
              <LogActions>
                <LogCheck><BoxCheck type="checkbox" />Log</LogCheck>
                <LogButton $pad={3}>Save</LogButton>
                <LogButton $pad={3}>Clear</LogButton>
                <Push />
                <UnitButton $flat $pad={4}>meters</UnitButton>
              </LogActions>
            </LogPane>
            <PaneSash />
            <DimPane>
              <DimTable>
                <colgroup>
                  {[34, 56, 24, 32, 56, 24, 27].map((w, i) => <col key={i} style={{ width: w }} />)}
                </colgroup>
                <thead>
                  <tr><th>Dim</th><th colSpan={3}>Min</th><th colSpan={3}>Max</th></tr>
                  <DotRow><td>.</td><td colSpan={3}>.</td><td colSpan={3}>.</td></DotRow>
                </thead>
                <tbody>
                  {dims.map(([d, min, max]) => (
                    <tr key={d}>
                      <th scope="row">{d}</th>
                      <td><DimInput aria-label={`${d} min`} defaultValue={min} /></td>
                      <td><StepButton aria-label={`Raise ${d} min`}><UpArrow /></StepButton></td>
                      <td><StepButton aria-label={`Lower ${d} min`}><DownArrow /></StepButton></td>
                      <td><DimInput aria-label={`${d} max`} defaultValue={max} /></td>
                      <td><StepButton aria-label={`Raise ${d} max`}><UpArrow /></StepButton></td>
                      <td><StepButton aria-label={`Lower ${d} max`}><DownArrow /></StepButton></td>
                    </tr>
                  ))}
                </tbody>
              </DimTable>
              <ScrollBar parts={[1, 55, 6]} />
            </DimPane>
            <SideButtons>
              {["Select corners", "Reset", "Query Edge", "Index Sets"].map((b) => <SideButton key={b}>{b}</SideButton>)}
            </SideButtons>
          </BottomArea>
        </Workspace>
      </Main>

      <TaskBar>
        <TaskApps>
          {apps.map((a) => <TaskButton key={a.name} aria-label={a.name} $state={a.state}>{a.icon}</TaskButton>)}
        </TaskApps>
        <Tray>
          <TrayGroup>
            <svg width="13" height="8"><path d="M1 7l6-6 5 6" fill="none" stroke="#fff" strokeWidth="1" /></svg>
            <svg width="18" height="12"><path d="M3 7a5 4 0 0 1 9-4 4 4 0 0 1 4 5z" fill="#9a9a9a" /><path d="M3 11a3 3 0 0 1 1-6c3 0 4 2 6 2 3-1 6 0 6 3l-1 1z" fill="#fff" /></svg>
          </TrayGroup>
          <Language>ENG<br />IN</Language>
          <TrayGroup>
            <svg width="16" height="13" fill="none"><path d="M1 5q7-7 14 0" stroke="#6a6b70" strokeWidth="1" /><path d="M3 7q5-5 10 0M5 9q3-3 6 0" stroke="#fff" strokeWidth="1" /><circle cx="8" cy="11" r="2" fill="#fff" /></svg>
            <svg width="17" height="14" fill="none" stroke="#fff"><path d="M1 5h3l4-3v10L4 9H1z" /><path d="M10 5q2 2 0 4M12 3q3 4 0 8" /><path d="M14 1q4 6 0 12" stroke="#6a6b70" /></svg>
            <svg width="17" height="14" fill="none" stroke="#fff"><path d="M6 3h8v9H4V8" /><path d="M7 5h5v5H6z" fill="#fff" /><path d="M15 6v3M1 3h4v2q-2 3-4 0zM2 3V0M4 3V0M3 6v4" /></svg>
          </TrayGroup>
          <Clock>05:43<br />15-02-2022</Clock>
        </Tray>
      </TaskBar>
    </Window>
  );
}
